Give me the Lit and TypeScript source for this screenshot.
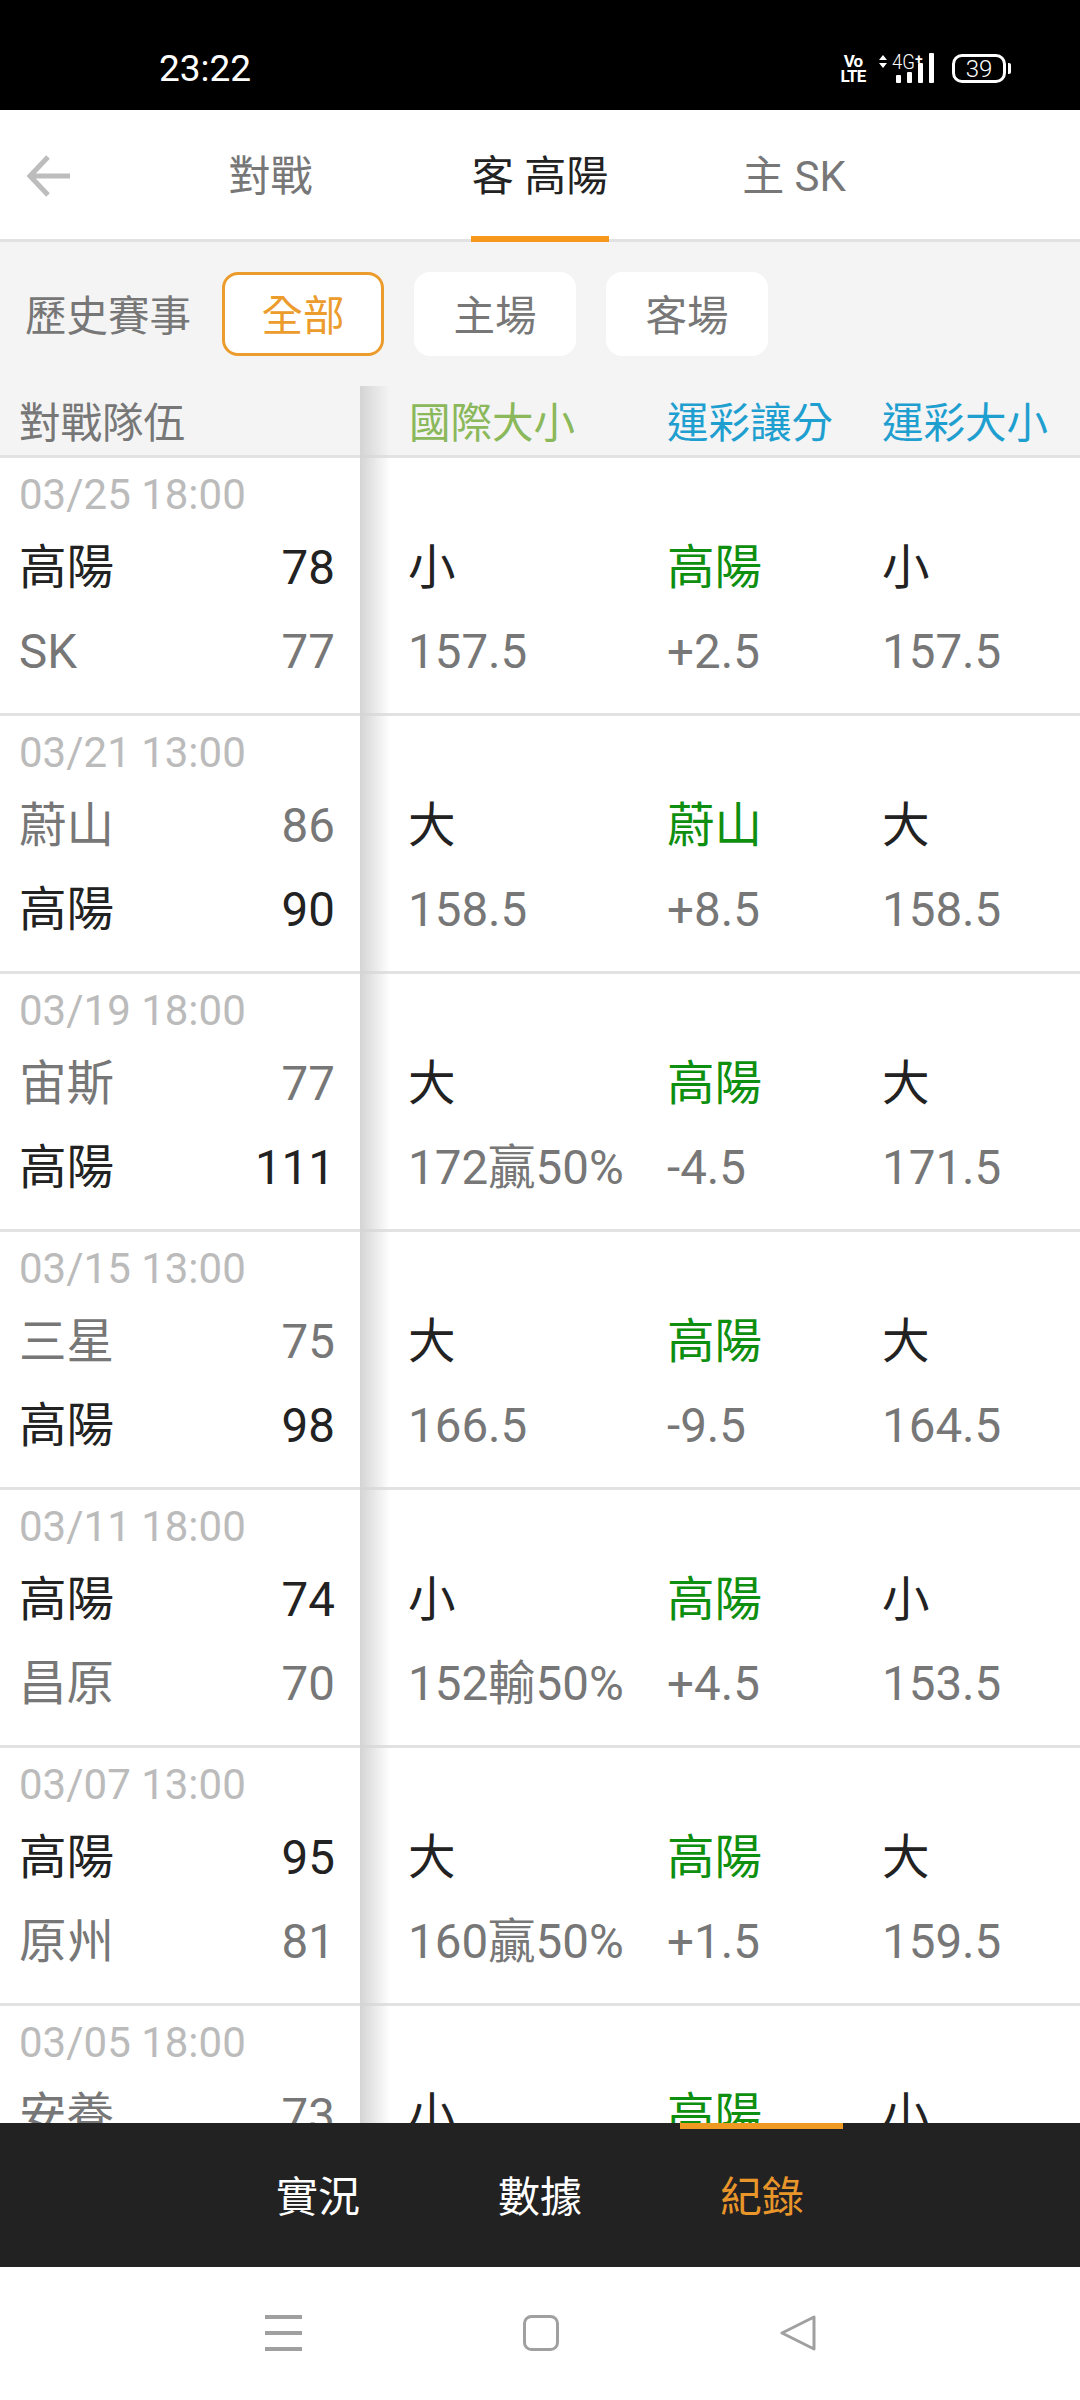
import { LitElement, html, css, svg } from "lit";
import { customElement } from "lit/decorators.js";

interface Match {
  date: string;
  home: [string, number];
  away: [string, number];
  winner: 0 | 1;
  intl: string;
  intlLine: string;
  spreadTeam: string;
  spread: string;
  ou: string;
  ouLine: string;
}

const MATCHES: Match[] = [
  { date: "03/25 18:00", home: ["高陽", 78], away: ["SK", 77], winner: 0, intl: "小", intlLine: "157.5", spreadTeam: "高陽", spread: "+2.5", ou: "小", ouLine: "157.5" },
  { date: "03/21 13:00", home: ["蔚山", 86], away: ["高陽", 90], winner: 1, intl: "大", intlLine: "158.5", spreadTeam: "蔚山", spread: "+8.5", ou: "大", ouLine: "158.5" },
  { date: "03/19 18:00", home: ["宙斯", 77], away: ["高陽", 111], winner: 1, intl: "大", intlLine: "172贏50%", spreadTeam: "高陽", spread: "-4.5", ou: "大", ouLine: "171.5" },
  { date: "03/15 13:00", home: ["三星", 75], away: ["高陽", 98], winner: 1, intl: "大", intlLine: "166.5", spreadTeam: "高陽", spread: "-9.5", ou: "大", ouLine: "164.5" },
  { date: "03/11 18:00", home: ["高陽", 74], away: ["昌原", 70], winner: 0, intl: "小", intlLine: "152輸50%", spreadTeam: "高陽", spread: "+4.5", ou: "小", ouLine: "153.5" },
  { date: "03/07 13:00", home: ["高陽", 95], away: ["原州", 81], winner: 0, intl: "大", intlLine: "160贏50%", spreadTeam: "高陽", spread: "+1.5", ou: "大", ouLine: "159.5" },
  { date: "03/05 18:00", home: ["安養", 73], away: ["高陽", 80], winner: 1, intl: "小", intlLine: "", spreadTeam: "高陽", spread: "", ou: "小", ouLine: "" },
];

@customElement("app-root")
export class AppRoot extends LitElement {
  static styles = css`
    :host {
      display: block;
      width: 1080px;
      height: 2400px;
      font-family: Roboto, "Noto Sans CJK TC", sans-serif;
      background: #fff;
      color: #222;
    }
    .page { display: flex; flex-direction: column; height: 2400px; overflow: hidden; }

    .status { height: 110px; flex: none; box-sizing: border-box; background: #000; color: #fff; display: flex; align-items: center; padding: 27px 69px 0 159px; }
    .time { font-size: 37px; font-weight: 400; line-height: 1; }
    .status-right { margin-left: auto; display: flex; align-items: center; }
    .volte { display: flex; flex-direction: column; align-items: center; font-size: 17px; font-weight: 700; line-height: 15px; width: 22px; margin-right: 14px; letter-spacing: -0.8px; }
    .signal { display: block; margin-right: 17px; }
    .batt { width: 54px; height: 29px; box-sizing: border-box; border: 3px solid #fff; border-radius: 10px; display: flex; align-items: center; justify-content: center; font-size: 24px; font-weight: 300; line-height: 1; }
    .nub { width: 3px; height: 11px; background: #fff; margin-left: 2px; border-radius: 0 2px 2px 0; }

    .tabs { height: 132px; flex: none; position: relative; display: grid; grid-template-columns: 269px 270px 238px; padding-left: 136px; box-sizing: border-box; background: #fff; border-bottom: 3px solid #e2e2e2; }
    .back { position: absolute; left: 27px; top: 45px; }
    .tab { display: flex; align-items: center; justify-content: center; font-size: 42px; line-height: 1; color: #777; padding-top: 5px; position: relative; }
    .tab.on { color: #222; }
    .tab.on::after { content: ""; position: absolute; left: 66px; width: 138px; height: 6px; bottom: -3px; background: #f7981d; }

    .filter { height: 144px; flex: none; background: #f4f4f4; display: flex; align-items: center; padding-left: 25px; box-sizing: border-box; }
    .filter-label { font-size: 41.5px; color: #777; width: 168px; margin-right: 29px; line-height: 1; padding-top: 6px; }
    .chips { display: flex; gap: 30px; }
    .chip { width: 162px; height: 84px; box-sizing: border-box; border-radius: 16px; background: #fff; color: #777; font-size: 41.5px; line-height: 1; display: flex; align-items: center; justify-content: center; padding-top: 6px; }
    .chip.on { border: 3px solid #ec9c2c; color: #ec9c2c; }

    .table { flex: 1; position: relative; overflow: hidden; min-height: 0; }
    .shade { position: absolute; left: 360px; top: 0; bottom: 0; width: 30px; background: linear-gradient(90deg, #d4d4d4, rgba(255,255,255,0)); }
    .head, .row { display: grid; grid-template-columns: 360px 307px 215px 1fr; }
    .head { height: 72px; box-sizing: border-box; background: #f4f4f4; border-bottom: 3px solid #e2e2e2; font-size: 41.5px; line-height: 1; align-items: center; padding-top: 6px; }
    .head .team-h { padding-left: 19px; color: #777; }
    .head .intl { padding-left: 49px; color: #8ab85a; }
    .head .cai { color: #1f9fd0; }
    .row { height: 258px; box-sizing: border-box; border-bottom: 3px solid #e2e2e2; padding: 7px 0 20px; grid-template-rows: 60px 84px 84px; }
    .date { grid-column: 1 / -1; font-size: 42px; color: #bbb; padding-left: 19px; line-height: 60px; }
    .team { display: flex; justify-content: space-between; align-items: center; padding: 3px 25px 0 19px; font-size: 47.5px; line-height: 1; color: #777; }
    .team.win { color: #222; }
    .cell { display: flex; align-items: center; font-size: 47.5px; line-height: 1; white-space: nowrap; color: #777; padding-top: 3px; }
    .cell.first { padding-left: 48px; }
    .cell.pick { color: #222; }
    .cell.green { color: #0f8f0f; }

    .bottom { height: 144px; flex: none; background: #222; position: relative; display: flex; justify-content: center; }
    .bottom .item { width: 222px; display: flex; align-items: center; justify-content: center; font-size: 42px; line-height: 1; color: #fff; padding-top: 6px; }
    .bottom .item.on { color: #e8952a; }
    .bottom .mark { position: absolute; left: 680px; top: 0; width: 163px; height: 6px; background: #ee9a22; }

    .sys { height: 132px; flex: none; background: #fff; display: flex; align-items: center; justify-content: center; gap: 221px; padding-bottom: 1px; }
    .sys svg { display: block; }
  `;

  private renderRow(m: Match) {
    return html`<div class="row">
      <div class="date">${m.date}</div>
      <div class="team ${m.winner === 0 ? "win" : ""}"><span>${m.home[0]}</span><span>${m.home[1]}</span></div>
      <div class="cell first pick">${m.intl}</div>
      <div class="cell green">${m.spreadTeam}</div>
      <div class="cell pick">${m.ou}</div>
      <div class="team ${m.winner === 1 ? "win" : ""}"><span>${m.away[0]}</span><span>${m.away[1]}</span></div>
      <div class="cell first">${m.intlLine}</div>
      <div class="cell">${m.spread}</div>
      <div class="cell">${m.ouLine}</div>
    </div>`;
  }

  render() {
    return html`<div class="page">
      <div class="status">
        <div class="time">23:22</div>
        <div class="status-right">
          <div class="volte"><span>Vo</span><span>LTE</span></div>
          <svg class="signal" width="57" height="31" viewBox="0 0 57 31" fill="#fff">
            ${svg`<path d="M5 2 L9 7 H1 Z M5 15 L1 10 H9 Z"/>`}
            ${svg`<text x="14" y="16" font-size="21" font-family="Roboto" font-weight="300" textLength="23" lengthAdjust="spacingAndGlyphs">4G</text>`}
            ${svg`<text x="37" y="11" font-size="14" font-family="Roboto" font-weight="700">+</text>`}
            ${svg`<rect x="18" y="22" width="5" height="8" rx="1"/><rect x="29" y="19" width="5" height="11" rx="1"/><rect x="40" y="10" width="5" height="20" rx="1"/><rect x="51" y="0" width="5" height="30" rx="1"/>`}
          </svg>
          <div class="batt">39</div>
          <div class="nub"></div>
        </div>
      </div>

      <div class="tabs">
        <svg class="back" width="43" height="42" viewBox="0 0 43 42" fill="none" stroke="#bdbdbd" stroke-width="5">
          <path d="M21 2 L3 21 L21 40 M3 21 H43"/>
        </svg>
        <div class="tab">對戰</div>
        <div class="tab on">客 高陽</div>
        <div class="tab">主 SK</div>
      </div>

      <div class="filter">
        <div class="filter-label">歷史賽事</div>
        <div class="chips">
          <div class="chip on">全部</div>
          <div class="chip">主場</div>
          <div class="chip">客場</div>
        </div>
      </div>

      <div class="table">
        <div class="head">
          <div class="team-h">對戰隊伍</div>
          <div class="intl">國際大小</div>
          <div class="cai">運彩讓分</div>
          <div class="cai">運彩大小</div>
        </div>
        ${MATCHES.map((m) => this.renderRow(m))}
        <div class="shade"></div>
      </div>

      <div class="bottom">
        <div class="item">實況</div>
        <div class="item">數據</div>
        <div class="item on">紀錄</div>
        <div class="mark"></div>
      </div>

      <div class="sys">
        <svg width="37" height="36" viewBox="0 0 37 36" fill="#a0a0a0"><rect y="0" width="37" height="4"/><rect y="16" width="37" height="4"/><rect y="32" width="37" height="4"/></svg>
        <svg width="36" height="36" viewBox="0 0 36 36" fill="none" stroke="#a0a0a0" stroke-width="3"><rect x="1.5" y="1.5" width="33" height="33" rx="7"/></svg>
        <svg width="36" height="36" viewBox="0 0 36 36" fill="none" stroke="#a0a0a0" stroke-width="3" stroke-linejoin="round"><path d="M34 2 V34 L2 18 Z"/></svg>
      </div>
    </div>`;
  }
}
